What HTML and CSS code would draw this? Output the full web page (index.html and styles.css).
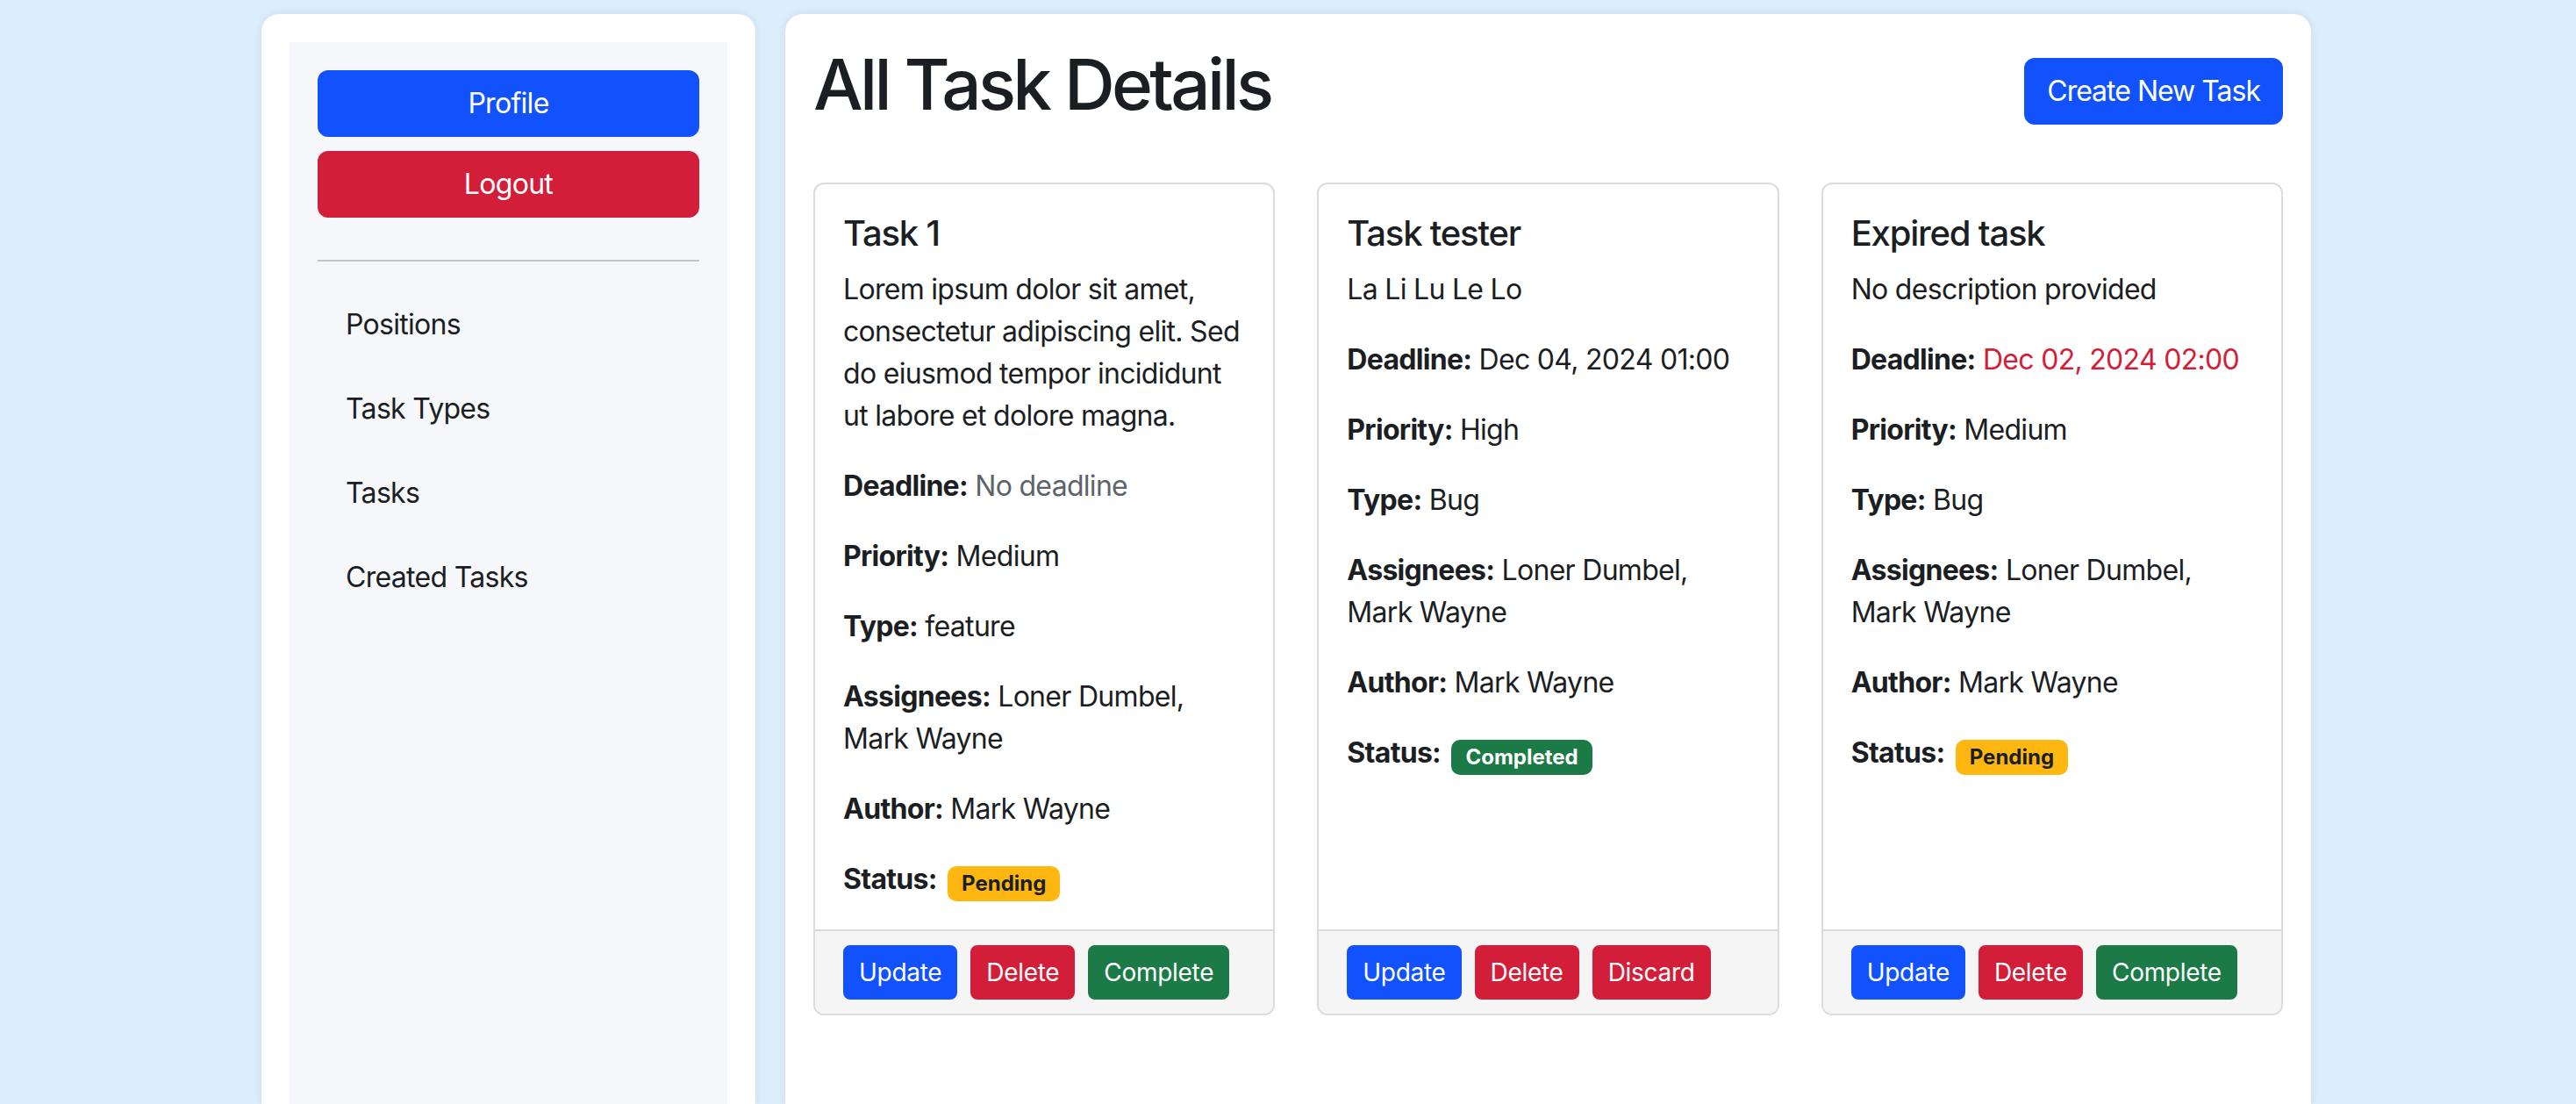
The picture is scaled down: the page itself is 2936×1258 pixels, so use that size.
FILE: index.html
```html
<!DOCTYPE html>
<html lang="en">
<head>
<meta charset="utf-8">
<title>All Task Details</title>
<link rel="stylesheet" href="styles.css">
</head>
<body>
<div class="layout">
  <aside class="side-card">
    <div class="sidebar">
      <button class="btn btn-primary btn-block">Profile</button>
      <button class="btn btn-danger btn-block logout">Logout</button>
      <hr class="divider">
      <ul class="nav">
        <li class="nav-item"><a class="nav-link">Positions</a></li>
        <li class="nav-item"><a class="nav-link">Task Types</a></li>
        <li class="nav-item"><a class="nav-link">Tasks</a></li>
        <li class="nav-item"><a class="nav-link">Created Tasks</a></li>
      </ul>
    </div>
  </aside>
  <main class="main-card">
    <div class="header">
      <h1 class="title">All Task Details</h1>
      <button class="btn btn-primary btn-create">Create New Task</button>
    </div>
    <div class="cards">
      <div class="card">
        <div class="card-body">
          <h5 class="card-title">Task 1</h5>
          <p class="card-text">Lorem ipsum dolor sit amet, consectetur adipiscing elit. Sed do eiusmod tempor incididunt ut labore et dolore magna.</p>
          <p class="card-text"><strong>Deadline:</strong> <span class="muted">No deadline</span></p>
          <p class="card-text"><strong>Priority:</strong> Medium</p>
          <p class="card-text"><strong>Type:</strong> feature</p>
          <p class="card-text"><strong>Assignees:</strong> Loner Dumbel, Mark Wayne</p>
          <p class="card-text"><strong>Author:</strong> Mark Wayne</p>
          <p class="card-text"><strong>Status:</strong> <span class="badge badge-warning">Pending</span></p>
        </div>
        <div class="card-footer">
          <button class="btn btn-sm btn-primary">Update</button>
          <button class="btn btn-sm btn-danger">Delete</button>
          <button class="btn btn-sm btn-success">Complete</button>
        </div>
      </div>
      <div class="card">
        <div class="card-body">
          <h5 class="card-title">Task tester</h5>
          <p class="card-text">La Li Lu Le Lo</p>
          <p class="card-text"><strong>Deadline:</strong> Dec 04, 2024 01:00</p>
          <p class="card-text"><strong>Priority:</strong> High</p>
          <p class="card-text"><strong>Type:</strong> Bug</p>
          <p class="card-text"><strong>Assignees:</strong> Loner Dumbel, Mark Wayne</p>
          <p class="card-text"><strong>Author:</strong> Mark Wayne</p>
          <p class="card-text"><strong>Status:</strong> <span class="badge badge-success">Completed</span></p>
        </div>
        <div class="card-footer">
          <button class="btn btn-sm btn-primary">Update</button>
          <button class="btn btn-sm btn-danger">Delete</button>
          <button class="btn btn-sm btn-danger">Discard</button>
        </div>
      </div>
      <div class="card">
        <div class="card-body">
          <h5 class="card-title">Expired task</h5>
          <p class="card-text">No description provided</p>
          <p class="card-text"><strong>Deadline:</strong> <span class="danger">Dec 02, 2024 02:00</span></p>
          <p class="card-text"><strong>Priority:</strong> Medium</p>
          <p class="card-text"><strong>Type:</strong> Bug</p>
          <p class="card-text"><strong>Assignees:</strong> Loner Dumbel, Mark Wayne</p>
          <p class="card-text"><strong>Author:</strong> Mark Wayne</p>
          <p class="card-text"><strong>Status:</strong> <span class="badge badge-warning">Pending</span></p>
        </div>
        <div class="card-footer">
          <button class="btn btn-sm btn-primary">Update</button>
          <button class="btn btn-sm btn-danger">Delete</button>
          <button class="btn btn-sm btn-success">Complete</button>
        </div>
      </div>
    </div>
  </main>
</div>
</body>
</html>
```
FILE: styles.css
```css
html, body {
  margin: 0;
  padding: 0;
}
body {
  background: #dcedfb;
  font-family: Inter, "Noto Sans", "Liberation Sans", sans-serif;
  font-size: 32px;
  line-height: 48px;
  letter-spacing: -0.7px;
  color: #1b1e22;
  height: 1258px;
  overflow: hidden;
}
* { box-sizing: border-box; }

.layout {
  display: flex;
  gap: 34px;
  width: 2336px;
  margin: 0 0 0 298px;
  padding-top: 16px;
  height: 1258px;
}

.side-card {
  width: 563px;
  flex: none;
  background: #fff;
  border-radius: 20px 20px 0 0;
  padding: 32px 32px 0;
  box-shadow: 0 0 10px rgba(30, 70, 110, 0.10);
}
.sidebar {
  background: #f5f7fa;
  height: 100%;
  padding: 32px;
}

.btn {
  display: inline-block;
  font-family: inherit;
  font-size: 32px;
  line-height: 48px;
  font-weight: 400;
  letter-spacing: -0.7px;
  padding: 12px 24px;
  border: 2px solid transparent;
  border-radius: 12px;
  color: #fff;
  cursor: pointer;
  text-align: center;
}
.btn-block {
  display: block;
  width: 100%;
}
.btn-create { letter-spacing: -1px; }
.btn-primary { background: #1152fd; border-color: #1152fd; }
.btn-danger { background: #d21e39; border-color: #d21e39; }
.btn-success { background: #1b7a46; border-color: #1b7a46; }

.logout { margin-top: 16px; }

.divider {
  border: 0;
  border-top: 2px solid #c2c4c6;
  margin: 48px 0 32px;
}

.nav {
  list-style: none;
  margin: 0;
  padding: 0;
}
.nav-item { margin-bottom: 16px; }
.nav-link {
  display: block;
  padding: 16px 32px;
  color: #1b1e22;
}

.main-card {
  flex: 1;
  background: #fff;
  border-radius: 20px 20px 0 0;
  padding: 32px;
  box-shadow: 0 0 10px rgba(30, 70, 110, 0.10);
}
.header {
  display: flex;
  justify-content: space-between;
  align-items: center;
  margin-bottom: 48px;
}
.title {
  font-size: 80px;
  line-height: 96px;
  font-weight: 500;
  margin: 0 0 16px;
  letter-spacing: -3.7px;
}

.cards {
  display: grid;
  grid-template-columns: repeat(3, 1fr);
  gap: 48px;
}
.card {
  display: flex;
  flex-direction: column;
  border: 2px solid #dcdcdc;
  border-radius: 12px;
  background: #fff;
}
.card-body {
  flex: 1;
  padding: 32px;
}
.card-title {
  font-size: 40px;
  line-height: 48px;
  font-weight: 500;
  letter-spacing: -1.2px;
  margin: 0 0 16px;
}
.card-text { margin: 0 0 32px; }
.card-text:last-child { margin-bottom: 0; }
.card-text strong { font-weight: 700; }

.muted { color: #5c636a; }
.danger { color: #d21e39; }

.badge {
  display: inline-block;
  font-size: 24px;
  line-height: 24px;
  font-weight: 700;
  letter-spacing: 0;
  padding: 8px 16px;
  margin-left: 4px;
  border-radius: 10px;
  vertical-align: -2px;
}
.badge-warning { background: #feb711; color: #1b1e22; }
.badge-success { background: #1b7a46; color: #fff; }

.card-footer {
  background: #f5f5f5;
  border-top: 2px solid #d9d9d9;
  border-radius: 0 0 10px 10px;
  padding: 16px 32px;
  display: flex;
  gap: 15px;
}
.btn-sm {
  font-size: 28px;
  line-height: 42px;
  letter-spacing: -0.3px;
  padding: 8px 16px;
  border-radius: 8px;
}
```
